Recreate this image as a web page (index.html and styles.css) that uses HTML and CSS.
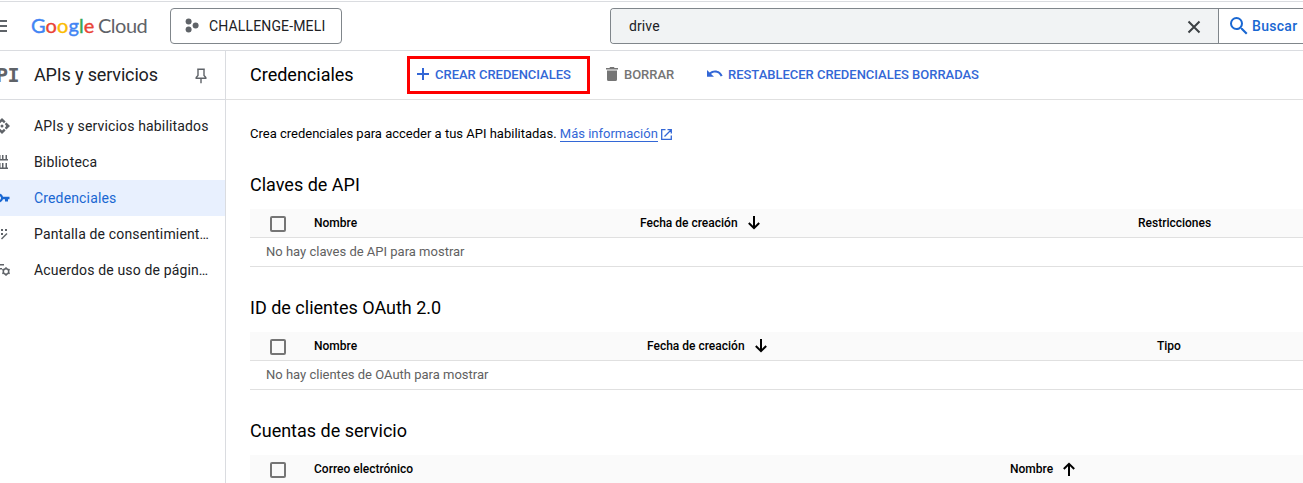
FILE: index.html
```html
<!DOCTYPE html>
<html lang="es">
<head>
<meta charset="utf-8">
<title>Credenciales</title>
<link rel="stylesheet" href="styles.css">
</head>
<body>
<header class="topbar">
  <svg class="menu" width="24" height="24" viewBox="0 0 24 24"><path d="M3 6h18v2H3zM3 11h18v2H3zM3 16h18v2H3z"/></svg>
  <div class="logo"><span class="google"><i class="b">G</i><i class="r">o</i><i class="y">o</i><i class="b">g</i><i class="g">l</i><i class="r">e</i></span><span class="cloud">Cloud</span></div>
  <div class="project">
    <svg width="14" height="16" viewBox="0 0 14 16"><circle cx="3.6" cy="3.4" r="3"/><circle cx="10.6" cy="7.4" r="3"/><circle cx="3.6" cy="11.4" r="3"/></svg>
    <span>CHALLENGE-MELI</span>
  </div>
  <div class="search">
    <div class="field"><span>drive</span>
      <svg width="14" height="14" viewBox="0 0 14 14"><path d="M1.5 1.5l11 11M12.5 1.5l-11 11"/></svg>
    </div>
    <div class="go">
      <svg width="24" height="24" viewBox="0 0 24 24"><path d="M15.5 14h-.79l-.28-.27A6.47 6.47 0 0 0 16 9.5 6.5 6.5 0 1 0 9.5 16c1.61 0 3.09-.59 4.23-1.57l.27.28v.79l5 4.99L20.49 19l-4.99-5zm-6 0a4.5 4.5 0 1 1 0-9 4.5 4.5 0 0 1 0 9z"/></svg>
      <span>Buscar</span>
    </div>
  </div>
</header>
<div class="body">
  <nav class="side">
    <div class="side-head"><span class="api">PI</span><span class="side-title">APIs y servicios</span>
      <svg class="pin" width="12" height="16" viewBox="0 0 12 16"><path d="M2.2 1.2h7.6M3 1.2v6.2L1.2 9.6v.7h9.6v-.7L9 7.4V1.2M6 10.5v4.7"/></svg>
    </div>
    <ul class="links">
      <li><svg width="16" height="16" viewBox="0 0 16 16"><circle cx="8" cy="8" r="1.5"/><path d="M8 0l3.600 3.600-1.600 1.600L8 3.400 6 5.200 4.400 3.600zM8 16l3.600-3.600-1.600-1.600L8 12.600 6 10.800l-1.600 1.600zM0 8l3.600-3.600L5.200 6 3.800 8l1.400 2-1.600 1.600zM16 8l-3.600-3.600L10.800 6l1.400 2-1.400 2 1.600 1.600z"/></svg><span>APIs y servicios habilitados</span></li>
      <li><svg class="library" width="16" height="16" viewBox="0 0 16 16"><path d="M0 5h15v1.500H0zM0 13.500h15V15H0zM6 1h1.500v4H6zM9 1h1.500v4H9zM12.500 1H14v4h-1.500zM6 9h1.500v5H6zM9 9h1.500v5H9zM12.500 9H14v5h-1.500z"/></svg><span>Biblioteca</span></li>
      <li class="active"><svg class="key" width="18" height="16" viewBox="0 0 18 16"><path fill-rule="evenodd" d="M11 6.800A4.400 4.400 0 1 0 11 9.200H13V11.500h3V9.200h1.500V6.800zM7 10a2 2 0 1 1 0-4 2 2 0 0 1 0 4z"/></svg><span>Credenciales</span></li>
      <li><svg class="consent" width="16" height="16" viewBox="0 0 16 16"><path d="M1 3h2v2H1zM5 3h2v2H5zM9 3h2v2H9zM13 3h2v2h-2zM1 7h2v2H1zM5 7h2v2H5zM9 7h2v2H9zM1 11h2v2H1z"/><path class="stroke" d="M15 7.500l-5.500 5.500"/></svg><span>Pantalla de consentimient…</span></li>
      <li><svg class="agreements" width="18" height="16" viewBox="0 0 18 16"><path d="M1 2h10v1.600H1zM1 6h8v1.600H1zM1 10h6v1.600H1z"/><circle class="gear" cx="13" cy="9.500" r="2.700"/><path class="teeth" d="M13 5.200v1.600M13 12.200v1.600M9.300 7.400l1.300.7M15.400 10.900l1.300.7M9.300 11.600l1.300-.7M15.400 8.100l1.300-.7"/></svg><span>Acuerdos de uso de págin…</span></li>
    </ul>
  </nav>
  <main class="main">
    <div class="toolbar">
      <h1>Credenciales</h1>
      <div class="action create"><svg width="12" height="12" viewBox="0 0 12 12"><path d="M5 0h2v5h5v2H7v5H5V7H0V5h5z"/></svg><span>CREAR CREDENCIALES</span></div>
      <div class="action delete"><svg width="12" height="14" viewBox="0 0 12 14"><path d="M0 1h3.500L4 0h4l.5 1H12v1.500H0zM1 3.500h10V12.500Q11 14 9.500 14h-7Q1 14 1 12.500z"/></svg><span>BORRAR</span></div>
      <div class="action restore"><svg width="16" height="8" viewBox="0 0 16 8"><path d="M0 0l2.600 2.500C4 1.200 5.900.5 8 .5c3.600 0 6.500 2.200 7.600 5.300l-1.900.7C12.900 4 10.700 2.400 8 2.400c-1.500 0-2.900.5-3.900 1.500L7 6.800H0z"/></svg><span>RESTABLECER CREDENCIALES BORRADAS</span></div>
    </div>
    <div class="content">
      <p class="intro"><span>Crea credenciales para acceder a tus API habilitadas. </span><a>Más información</a><svg width="11" height="11" viewBox="0 0 11 11"><path d="M4.500.7H.7v9.600h9.600V6.500M6.500.7h3.800v3.800M10.300.7L3.500 7.500"/></svg></p>
      <section>
        <h2>Claves de API</h2>
        <div class="row head keys"><b class="check"></b><span>Nombre</span><span class="sort">Fecha de creación <svg width="12" height="14" viewBox="0 0 12 14"><path d="M6 0v12M.8 7L6 12.200 11.200 7"/></svg></span><span>Restricciones</span></div>
        <div class="row empty">No hay claves de API para mostrar</div>
      </section>
      <section>
        <h2>ID de clientes OAuth 2.0</h2>
        <div class="row head clients"><b class="check"></b><span>Nombre</span><span class="sort">Fecha de creación <svg width="12" height="14" viewBox="0 0 12 14"><path d="M6 0v12M.8 7L6 12.200 11.200 7"/></svg></span><span>Tipo</span></div>
        <div class="row empty">No hay clientes de OAuth para mostrar</div>
      </section>
      <section>
        <h2>Cuentas de servicio</h2>
        <div class="row head accounts"><b class="check"></b><span>Correo electrónico</span><span class="sort">Nombre <svg width="12" height="14" viewBox="0 0 12 14"><path d="M6 14V2M.8 7L6 1.800 11.200 7"/></svg></span></div>
      </section>
    </div>
  </main>
</div>
</body>
</html>
```
FILE: styles.css
```css
*, *::after { box-sizing: border-box; }
body {
  margin: 0;
  height: 483px;
  overflow: hidden;
  background: #fff;
  color: #000;
  font-family: Roboto, "Liberation Sans", sans-serif;
  padding-top: 1px;
}
svg { flex: none; display: block; }
.topbar {
  display: flex;
  align-items: center;
  height: 50px;
  border-top: 1px solid #dadce0;
  border-bottom: 1px solid #dadce0;
}
.menu { margin-left: -14px; fill: #5f6368; }
.logo {
  display: flex;
  width: 139px;
  padding: 0 0 2px 21px;
  gap: 4px;
  font-family: Lato, sans-serif;
  font-size: 20px;
  line-height: 24px;
}
.logo i { font-style: normal; }
.google { width: 63px; letter-spacing: 0.1px; -webkit-text-stroke: 0.4px; }
.cloud { color: #5f6368; letter-spacing: -0.5px; }
.b { color: #4285f4; } .r { color: #ea4335; } .y { color: #fbbc04; } .g { color: #34a853; }
.project {
  display: flex;
  align-items: center;
  gap: 10px;
  width: 172px;
  height: 36px;
  margin-left: 21px;
  padding-left: 14px;
  border: 1px solid #80868b;
  border-radius: 4px;
  font-size: 14px;
  letter-spacing: 0.15px;
  color: #202124;
}
.project svg { fill: #5f6368; }
.search {
  display: flex;
  flex: 1;
  height: 36px;
  margin-left: 268px;
  border: 1px solid #80868b;
  border-right: 0;
  border-radius: 4px 0 0 4px;
}
.field {
  display: flex;
  flex: 1;
  align-items: center;
  justify-content: space-between;
  padding: 0 17px 0 18px;
  background: #f1f3f4;
  border-right: 1px solid #80868b;
  border-radius: 3px 0 0 3px;
  font-size: 14px;
  letter-spacing: 0.1px;
  color: #202124;
}
.field svg { fill: none; stroke: #3c4043; stroke-width: 2; margin-top: 2px; }
.go {
  display: flex;
  align-items: center;
  gap: 1px;
  width: 84px;
  padding-left: 8px;
  color: #1967d2;
  font-size: 14px;
  font-weight: 500;
  letter-spacing: 0.3px;
}
.go svg { fill: #1967d2; }
.body { display: flex; height: 432px; }
.side { width: 226px; flex: none; overflow: hidden; border-right: 1px solid #dadce0; }
.side-head {
  display: flex;
  align-items: center;
  height: 49px;
  padding-bottom: 1px;
  border-bottom: 1px solid #dadce0;
}
.api {
  width: 38px;
  margin-left: -4px;
  color: #5f6368;
  font: bold 20px/24px "DejaVu Sans Mono", monospace;
  letter-spacing: -0.5px;
}
.side-title { width: 161px; font-size: 18px; letter-spacing: -0.15px; color: #202124; }
.pin { fill: none; stroke: #5f6368; stroke-width: 1.4; margin-top: 2px; }
.links { list-style: none; margin: 0; padding: 8px 0 0; }
.links li {
  display: flex;
  align-items: center;
  height: 36px;
  font-size: 14px;
  letter-spacing: 0.15px;
  color: #202124;
  white-space: nowrap;
}
.links svg { margin-left: -6px; margin-right: 24px; fill: #5f6368; }
.links .library { margin-left: -7px; margin-right: 25px; }
.links .key { margin-left: -8px; fill: #1967d2; }
.links .consent { margin-left: -8px; margin-right: 26px; }
.links .agreements { margin-left: -7px; margin-right: 23px; }
.links .active { background: #e8f0fe; color: #1967d2; }
.stroke { stroke: #5f6368; stroke-width: 1.5; }
.gear { fill: none; stroke: #5f6368; stroke-width: 1.5; }
.teeth { stroke: #5f6368; stroke-width: 1.6; }
.main { flex: 1; min-width: 0; overflow: hidden; }
.toolbar {
  display: flex;
  align-items: center;
  height: 49px;
  padding: 0 0 2px 24px;
  border-bottom: 1px solid #e0e0e0;
}
h1, h2 { margin: 0; font-size: 18px; font-weight: 400; }
h1 { width: 157px; }
.action {
  display: flex;
  align-items: center;
  font-size: 13px;
  font-weight: 500;
  letter-spacing: -0.02px;
  color: #3367d6;
  fill: #3367d6;
  white-space: nowrap;
}
.create { position: relative; gap: 6px; padding-left: 10px; width: 199px; }
.create::after {
  content: "";
  position: absolute;
  left: 0;
  top: -11px;
  width: 183px;
  height: 38px;
  border: 3px solid #fe0000;
}
.delete { gap: 6px; width: 101px; color: #757575; fill: #757575; }
.restore { gap: 5px; }
.content { padding-left: 24px; }
.intro {
  display: flex;
  align-items: center;
  height: 16px;
  margin: 26px 0 0;
  font-size: 13px;
  white-space: pre;
}
.intro span, .intro a { height: 16px; line-height: 15px; }
.intro a { color: #3367d6; border-bottom: 1px solid #3367d6; }
.intro svg { margin-left: 3px; fill: none; stroke: #3367d6; stroke-width: 1.3; }
section { margin-bottom: 29px; }
.intro + section { margin-top: 31px; }
h2 { height: 36px; line-height: 24px; }
.row { border-bottom: 1px solid #e0e0e0; height: 29px; }
.head {
  display: grid;
  align-items: center;
  background: #fafafa;
  font-size: 12px;
  font-weight: 500;
}
.keys { grid-template-columns: 64px 326px 498px 1fr; }
.clients { grid-template-columns: 64px 333px 510px 1fr; }
.accounts { grid-template-columns: 64px 696px 1fr; }
.sort { display: flex; align-items: center; white-space: pre; }
.sort svg { margin-left: 7px; fill: none; stroke: #000; stroke-width: 2; }
.check { width: 16px; height: 16px; margin: 2px 0 0 20px; border: 2px solid #757575; border-radius: 2px; }
.empty { padding-left: 16px; font-size: 13px; line-height: 28px; color: #616161; }
```
